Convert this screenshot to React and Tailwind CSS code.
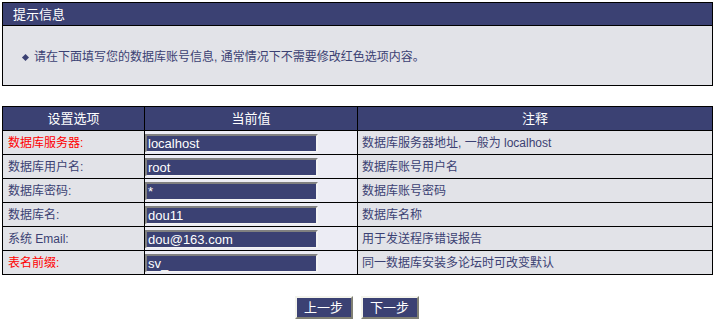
import React from "react";

const rows = [
  { label: "数据库服务器:", red: true, value: "localhost", note: "数据库服务器地址, 一般为 localhost" },
  { label: "数据库用户名:", value: "root", note: "数据库账号用户名" },
  { label: "数据库密码:", value: "*", note: "数据库账号密码" },
  { label: "数据库名:", value: "dou11", note: "数据库名称" },
  { label: "系统 Email:", value: "dou@163.com", note: "用于发送程序错误报告" },
  { label: "表名前缀:", red: true, value: "sv_", note: "同一数据库安装多论坛时可改变默认" },
];

const font = { fontFamily: '"Liberation Sans", "Noto Sans CJK SC", sans-serif' };

export default function App() {
  return (
    <div className="min-h-[322px] w-[715px] bg-white px-[2px] pt-[2px] text-[12px] leading-none text-[#3b4173]" style={font}>
      {/* tip box */}
      <div className="w-[711px] border border-black">
        <div className="flex h-[23px] items-center border-b border-black bg-[#3b4173] pl-[10px] text-[13px] text-white">
          提示信息
        </div>
        <div className="flex h-[59px] items-center bg-[#e2e3e8] pl-[20px] pt-[3px]">
          <span className="mr-[6px] inline-block h-[5px] w-[5px] rotate-45 bg-[#3b4173]"></span>
          <span>请在下面填写您的数据库账号信息, 通常情况下不需要修改红色选项内容。</span>
        </div>
      </div>

      {/* settings table */}
      <table className="mt-[20px] w-[711px] border-collapse border border-black">
        <thead>
          <tr className="h-[24px] bg-[#3b4173] text-white">
            <th className="w-[142px] border border-black text-[13px] font-normal">设置选项</th>
            <th className="w-[213px] border border-black text-[13px] font-normal">当前值</th>
            <th className="border border-black text-[13px] font-normal">注释</th>
          </tr>
        </thead>
        <tbody>
          {rows.map((r) => (
            <tr key={r.label} className="h-[24px]">
              <td className={"border border-black bg-[#e2e3e8] pl-[5px] " + (r.red ? "text-[#ff0000]" : "")}>{r.label}</td>
              <td className="border border-black bg-[#ececf4] p-0">
                <div className="flex h-[18px] w-[173px] items-center border-t-2 border-l-2 border-b border-r-2 border-t-[#808080] border-l-[#808080] border-b-[#f4f4f4] border-r-[#f4f4f4] bg-[#3b4173] pl-[1px] text-[13px] text-white">
                  {r.value}
                </div>
              </td>
              <td className="border border-black bg-[#e2e3e8] pl-[4px]">{r.note}</td>
            </tr>
          ))}
        </tbody>
      </table>

      {/* buttons */}
      <div className="mt-[21px] flex justify-center gap-[8px] pr-[2px]">
        <button className="h-[23px] w-[58px] border-2 border-t-[#f4f4ec] border-l-[#f4f4ec] border-b-[#808074] border-r-[#808074] bg-[#3b4173] text-[13px] text-white">
          上一步
        </button>
        <button className="h-[23px] w-[58px] border-2 border-t-[#f4f4ec] border-l-[#f4f4ec] border-b-[#808074] border-r-[#808074] bg-[#3b4173] text-[13px] text-white">
          下一步
        </button>
      </div>
    </div>
  );
}
